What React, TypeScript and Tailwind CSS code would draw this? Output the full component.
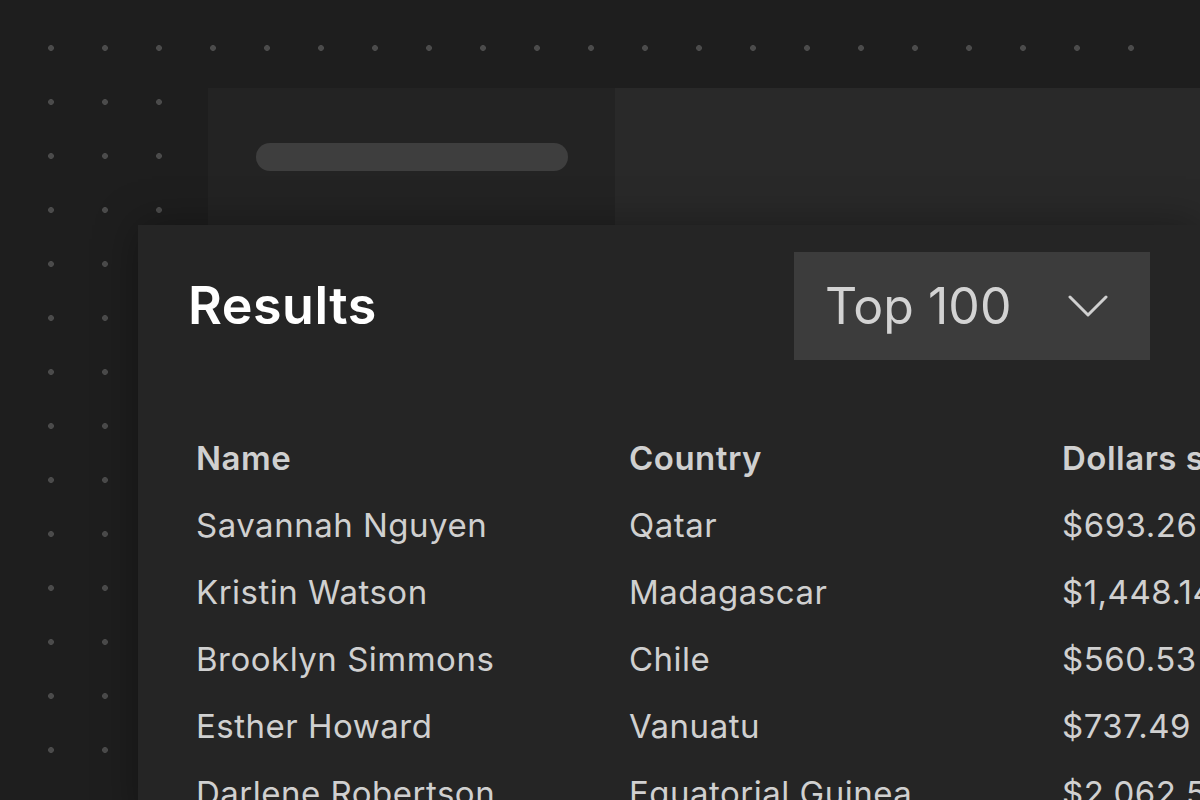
const rows = [
  ['Savannah Nguyen', 'Qatar', '$693.26'],
  ['Kristin Watson', 'Madagascar', '$1,448.14'],
  ['Brooklyn Simmons', 'Chile', '$560.53'],
  ['Esther Howard', 'Vanuatu', '$737.49'],
  ['Darlene Robertson', 'Equatorial Guinea', '$2,062.53'],
]

export default function App() {
  return (
    <div className="relative w-[1200px] h-[800px] overflow-hidden bg-[#1e1e1e] font-['Inter','Noto_Sans',sans-serif]">
      {/* Dot grid */}
      <div className="absolute left-[24px] top-[21px] w-[1134px] h-[810px] bg-[radial-gradient(circle,#4b4b4b_2.6px,transparent_3.2px)] bg-[length:54px_54px]" />

      {/* Back window */}
      <div className="relative ml-[208px] mt-[88px] flex h-[137px]">
        <div className="w-[407px] shrink-0 bg-[#232323] pl-[48px] pt-[55px]">
          <div className="h-[28px] w-[312px] rounded-full bg-[#3e3e3e]" />
        </div>
        <div className="flex-1 bg-[#292929]" />
      </div>

      {/* Front card */}
      <div className="relative ml-[138px] w-[1062px] h-[600px] bg-[#252525] px-[50px] pt-[27px] shadow-[0_0_40px_rgba(0,0,0,0.35)] overflow-hidden">
        <div className="flex items-center justify-between">
          <h1 className="text-[52px] font-semibold tracking-[0.5px] text-white">Results</h1>
          <div className="flex h-[108px] w-[356px] items-center justify-between bg-[#3c3c3c] pl-[31px] pr-[42px]">
            <span className="text-[50px] text-[#d3d3d3]">Top 100</span>
            <svg width="40" height="24" viewBox="0 0 40 24" fill="none" stroke="#d0d0d0" strokeWidth="3" strokeLinecap="round" strokeLinejoin="round">
              <path d="M2 3 L20 21 L38 3" />
            </svg>
          </div>
        </div>

        <div className="mt-[65px] pl-[8px] text-[33px] tracking-[0.5px] text-[#d0d0d0] whitespace-nowrap">
          <div className="grid h-[67px] grid-cols-[433px_433px_433px] items-center font-semibold">
            <span>Name</span>
            <span>Country</span>
            <span>Dollars spent</span>
          </div>
          {rows.map((r) => (
            <div key={r[0]} className="grid h-[67px] grid-cols-[433px_433px_433px] items-center">
              {r.map((c) => (
                <span key={c}>{c}</span>
              ))}
            </div>
          ))}
        </div>
      </div>
    </div>
  )
}
